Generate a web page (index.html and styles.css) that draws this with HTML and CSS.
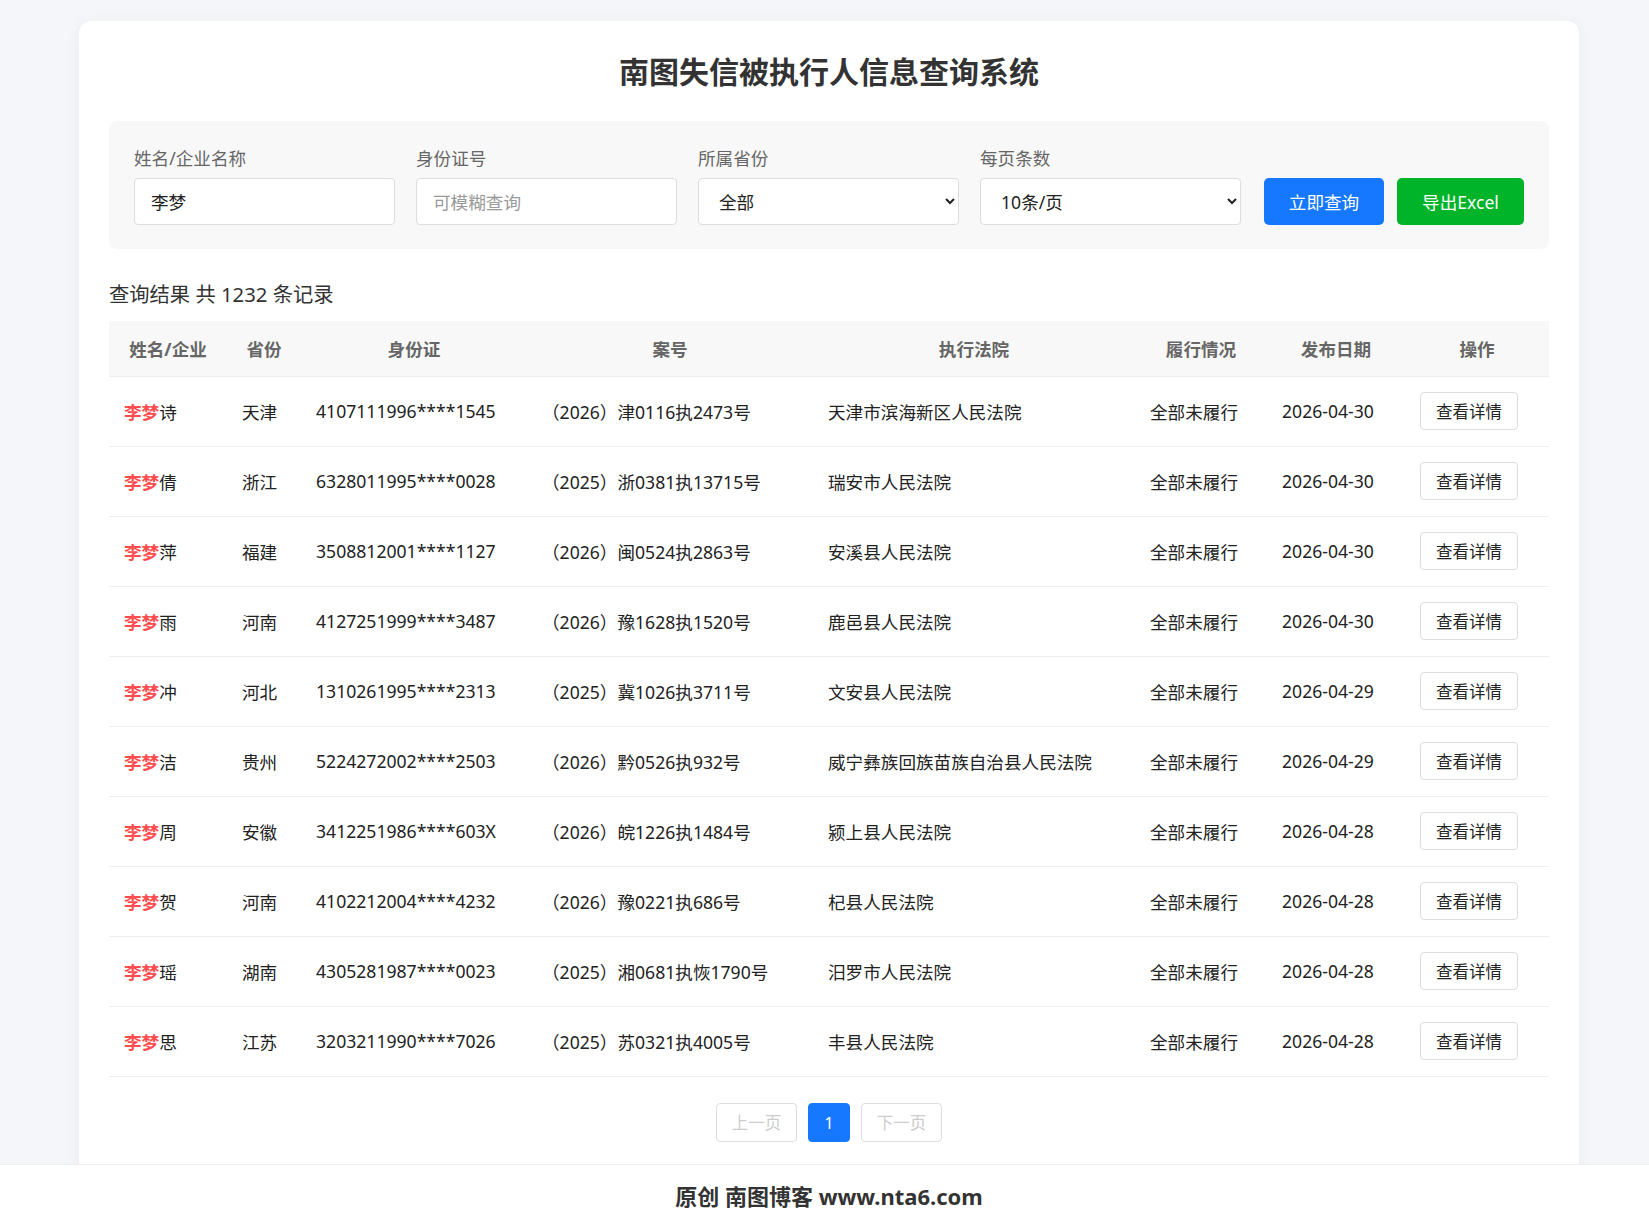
FILE: index.html
```html
<!DOCTYPE html>
<html lang="zh-CN">
  <head>
    <meta charset="UTF-8" />
    <meta name="viewport" content="width=device-width, initial-scale=1.0" />
    <title>南图失信被执行人信息查询系统</title>
    <link rel="stylesheet" href="styles.css">
  </head>
  <body>
    <div class="container">
      <h1>南图失信被执行人信息查询系统</h1>

      <form class="search-box" id="searchForm">
        <div class="field">
          <label for="name">姓名/企业名称</label>
          <input type="text" id="name" value="李梦" />
        </div>
        <div class="field">
          <label for="idcard">身份证号</label>
          <input type="text" id="idcard" placeholder="可模糊查询" />
        </div>
        <div class="field">
          <label for="province">所属省份</label>
          <select id="province">
            <option>全部</option>
          </select>
        </div>
        <div class="field">
          <label for="pageSize">每页条数</label>
          <select id="pageSize">
            <option>10条/页</option>
            <option>20条/页</option>
            <option>50条/页</option>
          </select>
        </div>
        <div class="actions">
          <button type="button" class="btn btn-search">立即查询</button>
          <button type="button" class="btn btn-export">导出Excel</button>
        </div>
      </form>

      <div class="result-info">查询结果 共 1232 条记录</div>

      <table class="result-table">
        <colgroup>
          <col class="c-name" />
          <col class="c-prov" />
          <col class="c-id" />
          <col class="c-case" />
          <col class="c-court" />
          <col class="c-status" />
          <col class="c-date" />
          <col class="c-op" />
        </colgroup>
        <thead>
          <tr>
            <th>姓名/企业</th>
            <th>省份</th>
            <th>身份证</th>
            <th>案号</th>
            <th>执行法院</th>
            <th>履行情况</th>
            <th>发布日期</th>
            <th>操作</th>
          </tr>
        </thead>
        <tbody>
          <tr>
            <td><span class="hl">李梦</span>诗</td>
            <td>天津</td>
            <td>4107111996****1545</td>
            <td>（2026）津0116执2473号</td>
            <td>天津市滨海新区人民法院</td>
            <td>全部未履行</td>
            <td>2026-04-30</td>
            <td><button type="button" class="btn-detail">查看详情</button></td>
          </tr>
          <tr>
            <td><span class="hl">李梦</span>倩</td>
            <td>浙江</td>
            <td>6328011995****0028</td>
            <td>（2025）浙0381执13715号</td>
            <td>瑞安市人民法院</td>
            <td>全部未履行</td>
            <td>2026-04-30</td>
            <td><button type="button" class="btn-detail">查看详情</button></td>
          </tr>
          <tr>
            <td><span class="hl">李梦</span>萍</td>
            <td>福建</td>
            <td>3508812001****1127</td>
            <td>（2026）闽0524执2863号</td>
            <td>安溪县人民法院</td>
            <td>全部未履行</td>
            <td>2026-04-30</td>
            <td><button type="button" class="btn-detail">查看详情</button></td>
          </tr>
          <tr>
            <td><span class="hl">李梦</span>雨</td>
            <td>河南</td>
            <td>4127251999****3487</td>
            <td>（2026）豫1628执1520号</td>
            <td>鹿邑县人民法院</td>
            <td>全部未履行</td>
            <td>2026-04-30</td>
            <td><button type="button" class="btn-detail">查看详情</button></td>
          </tr>
          <tr>
            <td><span class="hl">李梦</span>冲</td>
            <td>河北</td>
            <td>1310261995****2313</td>
            <td>（2025）冀1026执3711号</td>
            <td>文安县人民法院</td>
            <td>全部未履行</td>
            <td>2026-04-29</td>
            <td><button type="button" class="btn-detail">查看详情</button></td>
          </tr>
          <tr>
            <td><span class="hl">李梦</span>洁</td>
            <td>贵州</td>
            <td>5224272002****2503</td>
            <td>（2026）黔0526执932号</td>
            <td>威宁彝族回族苗族自治县人民法院</td>
            <td>全部未履行</td>
            <td>2026-04-29</td>
            <td><button type="button" class="btn-detail">查看详情</button></td>
          </tr>
          <tr>
            <td><span class="hl">李梦</span>周</td>
            <td>安徽</td>
            <td>3412251986****603X</td>
            <td>（2026）皖1226执1484号</td>
            <td>颍上县人民法院</td>
            <td>全部未履行</td>
            <td>2026-04-28</td>
            <td><button type="button" class="btn-detail">查看详情</button></td>
          </tr>
          <tr>
            <td><span class="hl">李梦</span>贺</td>
            <td>河南</td>
            <td>4102212004****4232</td>
            <td>（2026）豫0221执686号</td>
            <td>杞县人民法院</td>
            <td>全部未履行</td>
            <td>2026-04-28</td>
            <td><button type="button" class="btn-detail">查看详情</button></td>
          </tr>
          <tr>
            <td><span class="hl">李梦</span>瑶</td>
            <td>湖南</td>
            <td>4305281987****0023</td>
            <td>（2025）湘0681执恢1790号</td>
            <td>汨罗市人民法院</td>
            <td>全部未履行</td>
            <td>2026-04-28</td>
            <td><button type="button" class="btn-detail">查看详情</button></td>
          </tr>
          <tr>
            <td><span class="hl">李梦</span>思</td>
            <td>江苏</td>
            <td>3203211990****7026</td>
            <td>（2025）苏0321执4005号</td>
            <td>丰县人民法院</td>
            <td>全部未履行</td>
            <td>2026-04-28</td>
            <td><button type="button" class="btn-detail">查看详情</button></td>
          </tr>
        </tbody>
      </table>

      <div class="pagination">
        <button type="button" class="page-btn" disabled>上一页</button>
        <button type="button" class="page-btn active">1</button>
        <button type="button" class="page-btn" disabled>下一页</button>
      </div>
    </div>

    <div class="footer">原创 南图博客 www.nta6.com</div>
  </body>
</html>
```

FILE: styles.css
```css
* {
  box-sizing: border-box;
}

body {
  font-family: "Noto Sans", "Noto Sans CJK SC", sans-serif;
  margin: 0;
  padding: 21px 70px 0 79px;
  background-color: #f4f6fa;
  color: #222;
  font-size: 17.6px;
}

.container {
  background-color: #fff;
  border-radius: 12px;
  box-shadow: 0 2px 14px rgba(0, 0, 0, 0.05);
  padding: 30px 30px 56px;
}

h1 {
  margin: 0 0 28px;
  font-size: 30px;
  line-height: 42px;
  text-align: center;
  color: #333;
  font-weight: bold;
}

/* Search box */
.search-box {
  display: flex;
  align-items: flex-end;
  gap: 21px;
  background-color: #f8f8f8;
  border-radius: 8px;
  padding: 24px 25px;
}

.field {
  flex: 1;
  display: flex;
  flex-direction: column;
  min-width: 0;
}

.field label {
  font-size: 17.6px;
  line-height: 26px;
  color: #666;
  margin-bottom: 7px;
}

.field input,
.field select {
  height: 47px;
  width: 100%;
  border: 1px solid #ddd;
  border-radius: 4px;
  background-color: #fff;
  padding: 0 16px;
  font-family: inherit;
  font-size: 17.6px;
  color: #222;
}

.field input::placeholder {
  color: #999;
}

.actions {
  display: flex;
  gap: 13px;
  margin-left: 2px;
}

.btn {
  height: 47px;
  border: none;
  border-radius: 5px;
  color: #fff;
  font-family: inherit;
  font-size: 17.6px;
  cursor: pointer;
}

.btn-search {
  width: 120px;
  background-color: #1677ff;
}

.btn-export {
  width: 127px;
  background-color: #00b42a;
}

.result-info {
  margin: 31px 0 13px;
  font-size: 20.3px;
  line-height: 28px;
  color: #333;
}

/* Table */
.result-table {
  width: 100%;
  border-collapse: collapse;
  table-layout: fixed;
}

.c-name { width: 118px; }
.c-prov { width: 74px; }
.c-id { width: 226px; }
.c-case { width: 286px; }
.c-court { width: 322px; }
.c-status { width: 132px; }
.c-date { width: 138px; }
.c-op { width: 144px; }

.result-table th {
  height: 55px;
  padding: 0 15px;
  background-color: #f8f8f8;
  color: #666;
  font-weight: bold;
  font-size: 17.6px;
  text-align: center;
  border-bottom: 1px solid #eee;
}

.result-table td {
  height: 70px;
  padding: 0 15px;
  border-bottom: 1px solid #eee;
  font-size: 17.6px;
  color: #222;
  white-space: nowrap;
}

.hl {
  color: #ff4d4f;
  font-weight: bold;
}

.btn-detail {
  width: 98px;
  height: 38px;
  background-color: #fff;
  border: 1px solid #ddd;
  border-radius: 4px;
  font-family: inherit;
  font-size: 16.5px;
  color: #222;
  cursor: pointer;
}

/* Pagination */
.pagination {
  display: flex;
  justify-content: center;
  gap: 11px;
  margin-top: 26px;
}

.page-btn {
  height: 39px;
  min-width: 41px;
  padding: 0 15px;
  background-color: #fff;
  border: 1px solid #ddd;
  border-radius: 4px;
  font-family: inherit;
  font-size: 16.5px;
  color: #333;
}

.page-btn:disabled {
  color: #ccc;
}

.page-btn.active {
  background-color: #1677ff;
  border-color: #1677ff;
  color: #fff;
}

/* Footer */
.footer {
  position: fixed;
  left: 0;
  right: 0;
  bottom: 0;
  height: 52px;
  padding: 11px 0 0 9px;
  line-height: 40px;
  background-color: #fff;
  border-top: 1px solid #eee;
  text-align: center;
  font-size: 22px;
  font-weight: bold;
  color: #333;
}
```
